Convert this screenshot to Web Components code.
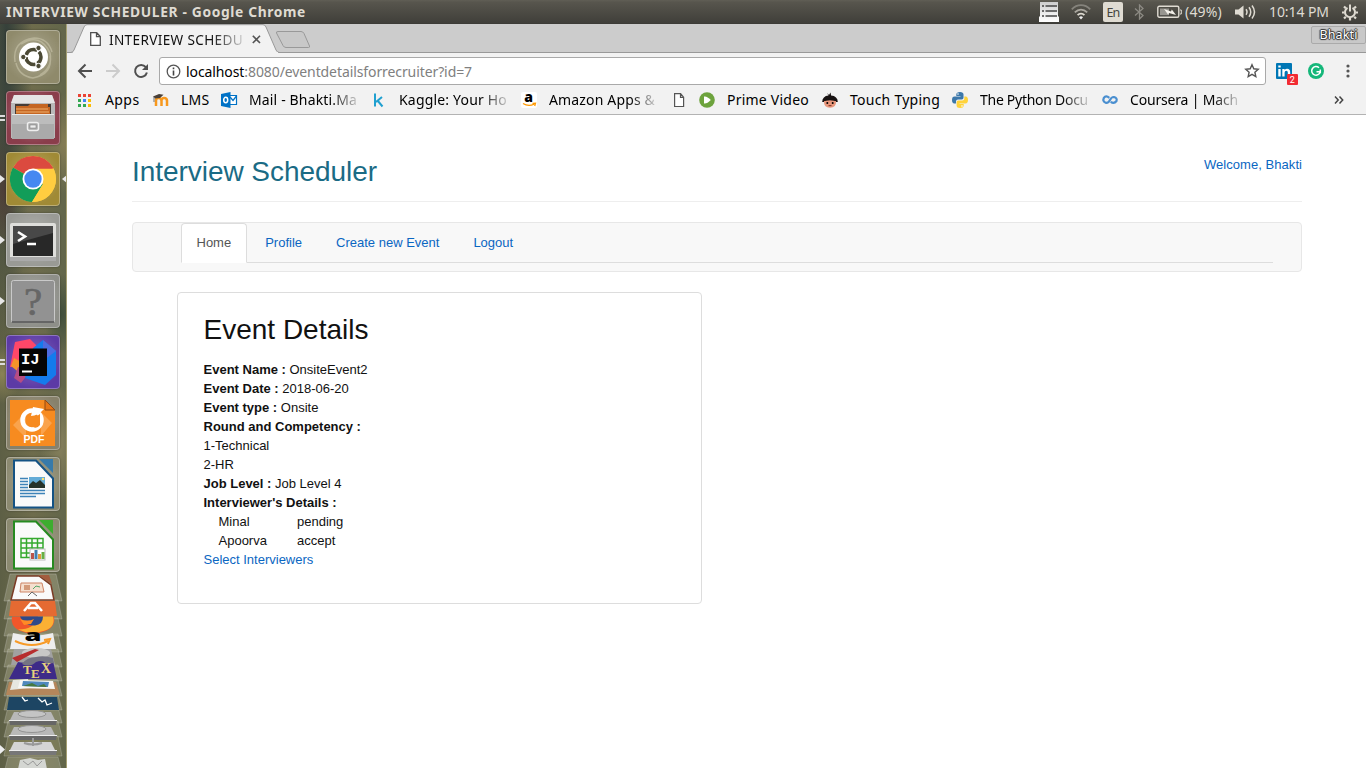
<!DOCTYPE html>
<html lang="en">
<head>
<meta charset="utf-8">
<title>Interview Scheduler</title>
<style>
html,body{margin:0;height:100%;overflow:hidden;background:#fff}
body{font-family:"Noto Sans","Open Sans",sans-serif}
</style>
</head>
<body>
<desktop-shell></desktop-shell>

<template id="t-desktop-shell">
<style>
:host{display:grid;grid-template:24px 744px / 67px 1299px;width:1366px;height:768px;overflow:hidden}
top-panel{grid-column:1 / 3}
browser-window{min-width:0}
</style>
<top-panel></top-panel><app-dock></app-dock>
<browser-window><scheduler-page></scheduler-page></browser-window>
</template>

<template id="t-top-panel">
<style>
:host{display:flex;align-items:center;box-sizing:border-box;height:24px;padding:0 8px 0 6px;background:linear-gradient(#605e55 0,#57554d 10%,#403f3a 95%,#3a3935);color:#dfdbd2;font-size:14px;line-height:24px}
.title{font-weight:700;font-size:13.8px;flex:1}
svg{display:block;flex:none}
.en{width:20px;height:20px;border-radius:2px;background:#dfdbd2;color:#45443e;font-size:12.5px;line-height:21px;display:flex;justify-content:center;box-sizing:border-box}
</style>
<div class="title"><fit-text w="300">INTERVIEW SCHEDULER - Google Chrome</fit-text></div>
<svg width="22" height="20" viewBox="0 0 22 20"><defs><linearGradient id="g" x2="0" y2="1"><stop offset="0" stop-color="#ccc"/><stop offset=".6" stop-color="#eee"/><stop offset="1" stop-color="#fff"/></linearGradient></defs><path d="M2 0h18v14l1 1v5H1v-5l1-1z" fill="url(#g)"/><path d="M4 4h2M7.500 4H19M4 9h2M7.500 9H19M4 14h2M7.500 14H19" stroke="#444" stroke-width="1.500"/></svg>
<svg style="margin-left:11px" width="20" height="16" viewBox="0 0 20 16" fill="none" stroke-width="1.8"><path d="M.8 5.300C6-.2 14-.2 19.200 5.300" stroke="#85837c"/><path d="M3.800 8.300C7.500 4.600 12.500 4.600 16.200 8.300" stroke="#aaa79f"/><path d="M6.600 11.200C8.500 9.200 11.500 9.200 13.400 11.200" stroke="#dfdbd2"/><path d="M8 13.200q2-1.700 4 0l-2 2.300z" fill="#eee"/></svg>
<div class="en" style="margin-left:12px"><fit-text w="13">En</fit-text></div>
<svg style="margin-left:11px" width="11" height="16" viewBox="0 0 11 16" fill="none" stroke="#8c8a83" stroke-width="1.300"><path d="M1 4.500L9 11.500 5.500 15V1L9 4.500 1 11.500"/></svg>
<svg style="margin-left:12px" width="25" height="14" viewBox="0 0 25 14"><rect x=".8" y="1.300" width="21" height="11" rx="1.500" fill="none" stroke="#dfdbd2" stroke-width="1.400"/><path d="M23 5h1.300v4H23" fill="none" stroke="#dfdbd2"/><rect x="3" y="3.500" width="9" height="6.700" fill="#989690"/><path d="M7 4l7 2.500.8-2L19 10l-7-2-.8 1.700z" fill="#f2efe8"/></svg>
<fit-text style="margin-left:3px" w="37">(49%)</fit-text>
<svg style="margin-left:13px" width="21" height="16" viewBox="0 0 21 16"><path d="M0 5.500h3.500L8.500 1.500v13l-5-4H0z" fill="#dfdbd2"/><path d="M11 5.200q2 2.800 0 5.600M14 3.300q3.500 4.700 0 9.400M17 1.500q5 6.500 0 13" fill="none" stroke="#dfdbd2" stroke-width="1.500"/></svg>
<fit-text style="margin-left:13px" w="60">10:14 PM</fit-text>
<svg style="margin-left:13px" width="16" height="18" viewBox="0 0 16 18" fill="none" stroke="#dfdbd2"><path d="M5.500 4.800A5 5 0 1 0 10.500 4.800" stroke-width="2"/><path d="M8 1.500v7" stroke-width="2"/><path d="M2 3.500l1.800 1.800M14 3.500l-1.800 1.800M0 9.500h2.500M16 9.500h-2.500M2 15.500l1.800-1.800M14 15.500l-1.800-1.800M8 17.500V15" stroke-width="2.200"/></svg>
</template>

<template id="t-fit-text"><style>:host{display:inline-block;flex:none;overflow:visible}:host([fade]){-webkit-mask-image:linear-gradient(90deg,#000 76%,#0003 99%);mask-image:linear-gradient(90deg,#000 76%,#0003 99%)}span{display:inline-block;white-space:pre;vertical-align:top}</style><span><slot></slot></span></template>

<template id="t-browser-window">
<style>
:host{display:flex;flex-direction:column;background:#fff;overflow:hidden}
.strip{height:29px;background:#ccc;display:flex;align-items:flex-start;position:relative;flex:none}
.tab{display:grid;width:213px;height:29px;flex:none}
.tab>*{grid-area:1/1}
.tab .c{display:flex;align-items:center;height:28px;padding:2px 0 0 23px;box-sizing:border-box;font-size:13.6px;color:#111}
.strip:after{content:"";position:absolute;left:0;right:0;bottom:0;height:1px;background:#999;z-index:0}
.tab,.newtab{position:relative;z-index:1}
.newtab{margin:6px 0 0 -5px}
.user{margin:2px 0 0 auto;width:55px;height:18px;box-sizing:border-box;border:1px solid #aaa;border-radius:2px;background:#c8c8c8;display:flex;justify-content:center;color:#fff;font-size:12.5px;line-height:16px;text-shadow:0 0 1px #222,1px 0 1px #333,-1px 0 1px #333,0 1px 1px #333,0 -1px 1px #333}
.bar{display:flex;align-items:center;height:36px;flex:none;background:#f2f2f2;padding-left:10px;box-sizing:border-box}
.bar>svg{flex:none;overflow:visible}
.omni{margin-left:10px;width:1107px;height:28px;box-sizing:border-box;border:1px solid #a9a9a9;border-radius:3px;background:#fff;display:flex;align-items:center;padding:0 5px 0 6px;font-size:14px;color:#808080;flex:none}
.omni b{font-weight:400;color:#000}
.sp{flex:1}
</style>
<div class="strip">
 <div class="tab"><svg width="213" height="29"><path d="M0 28.500H3.500Q6 28.500 7 26L17 3Q18 .7 20 .7H196Q198 .7 199 3L209 26Q210 28.500 212.500 28.500" fill="#f2f2f2" stroke="#999"/><path d="M6 28.500H211" stroke="#f2f2f2"/></svg>
 <div class="c"><svg width="11" height="14" viewBox="0 0 11 14" fill="#fff" stroke="#505050" stroke-width="1.300"><path d="M.7.700h6l3.600 3.800v8.800H.7zM6.500.7v4h3.800"/></svg><fit-text fade style="margin-left:8px" w="134">INTERVIEW SCHEDU</fit-text><svg style="margin-left:9px" width="9" height="9" stroke="#555" stroke-width="1.600"><path d="M.8.800l7.200 7.200M8 .8L.8 8"/></svg></div></div>
 <svg class="newtab" width="36" height="19" fill="#c8c8c8" stroke="#999"><path d="M3 1.500h23q2 0 3 2L34.500 16q.5 1.500-1 1.500H11q-2 0-3-2L1.500 3Q1 1.500 3 1.500z"/></svg>
 <div class="user"><fit-text w="38">Bhakti</fit-text></div>
</div>
<div class="bar">
 <svg width="16" height="16" viewBox="0 0 16 16" fill="none" stroke="#4f4f4f" stroke-width="2"><path d="M15 8H2.500M8.500 1.500L2 8l6.500 6.500"/></svg>
 <svg style="margin-left:12px" width="16" height="16" viewBox="0 0 16 16" fill="none" stroke="#ccc" stroke-width="2"><path d="M1 8h12.500M7.500 1.500L14 8l-6.500 6.500"/></svg>
 <svg style="margin-left:12px" width="16" height="16" viewBox="0 0 16 16" fill="none" stroke="#4f4f4f" stroke-width="2"><path d="M12.800 4.200A6 6 0 1 0 13.900 9.500"/><path d="M15 1v6H9z" fill="#4f4f4f" stroke="none"/></svg>
 <div class="omni"><svg width="15" height="15" viewBox="0 0 15 15"><circle cx="7.500" cy="7.500" r="6.300" fill="none" stroke="#555" stroke-width="1.300"/><path d="M7.500 6.500v5M7.500 3.500v1.700" stroke="#444" stroke-width="1.600"/></svg><fit-text style="margin-left:5px" w="286"><b>localhost</b>:8080/eventdetailsforrecruiter?id=7</fit-text><span class="sp"></span>
 <svg width="16" height="16" viewBox="0 0 16 16" fill="none" stroke="#555" stroke-width="1.400"><path d="M8 1.800l1.800 4 4.400.5-3.300 2.900.9 4.300L8 11.300l-3.800 2.200.9-4.300-3.300-2.900 4.400-.5z"/></svg></div>
 <svg style="margin-left:10px" width="22" height="24" viewBox="0 0 22 24"><rect y="4" width="16" height="16" rx="1" fill="#0077b5"/><path transform="translate(0 2)" d="M2.300 8h2.400v7.500H2.300zM2.300 4.500h2.400v2H2.300zM6.300 8h2.300v1q1-1.200 2.600-1.200 3 0 3 3.500v4.200h-2.400v-4q0-1.800-1.400-1.800-1.800 0-1.800 2v3.800H6.300z" fill="#fff"/><rect x="11" y="15" width="11" height="11" rx="1" fill="#f22b33"/><text x="16.400" y="24" text-anchor="middle" font-family="Roboto,sans-serif" font-size="9" fill="#fff">2</text></svg>
 <svg style="margin-left:10px" width="16" height="16" viewBox="0 0 16 16"><circle cx="8" cy="8" r="8" fill="#15b77a"/><path d="M11 4.800A4.300 4.300 0 1 0 12.200 8.800H8.500M12.300 6.600v3.600" fill="none" stroke="#fff" stroke-width="1.500"/></svg>
 <svg style="margin-left:22px" width="4" height="14" fill="#555"><circle cx="2" cy="2" r="1.600"/><circle cx="2" cy="7" r="1.600"/><circle cx="2" cy="12" r="1.600"/></svg>
</div>
<bookmark-bar></bookmark-bar>
<slot></slot>
</template>

<template id="t-bookmark-item">
<style>:host{display:flex;align-items:center;gap:12px;height:20px}::slotted(svg){width:16px;height:16px;flex:none;display:block;overflow:visible}</style><slot></slot>
</template>

<template id="t-bookmark-bar">
<style>
:host{display:grid;grid-template-columns:76px 68px 150px 150px 150px 28px 123px 130px 150px 150px 1fr;height:26px;flex:none;box-sizing:border-box;padding:0 0 3px 10px;background:#f2f2f2;border-bottom:1px solid #b3b3b3;font-size:14px;line-height:20px;color:#000;align-items:center}
.more{justify-self:end;margin-right:22px}
</style>
<bookmark-item><svg viewBox="0 0 16 16"><path d="M1 2h3v3H1zM6 2h3v3H6zM11 2h3v3h-3z" fill="#ea4335"/><path d="M1 7h3v3H1zM1 12h3v3H1z" fill="#34a853"/><path d="M6 7h3v3H6z" fill="#4285f4"/><path d="M6 12h3v3H6z" fill="#34a853"/><path d="M11 7h3v3h-3zM11 12h3v3h-3z" fill="#fbbc05"/></svg><fit-text w="34.500">Apps</fit-text></bookmark-item>
<bookmark-item><svg viewBox="0 0 16 16"><path d="M3 14V8.500q0-2.500 2.600-2.500T8.500 8.500V14M8.500 8.500Q8.700 6 11.200 6t2.800 2.500V14" fill="none" stroke="#f7981d" stroke-width="2.500"/><path d="M0 4.500L6 2l4.500.8L7 6 2 6.500z" fill="#4a4038"/><path d="M1 5v5" stroke="#777"/></svg><fit-text w="28.500">LMS</fit-text></bookmark-item>
<bookmark-item><svg viewBox="0 0 16 16"><path d="M8 3.500h7.500v9H8z" fill="#fff" stroke="#0072c6" stroke-width="1.200"/><path d="M9 5l3 3.500L15.500 4" fill="none" stroke="#0072c6" stroke-width="1.300"/><path d="M0 2l9.500-2v16L0 14z" fill="#0072c6"/><ellipse cx="4.700" cy="8" rx="2" ry="2.700" fill="none" stroke="#fff" stroke-width="1.500"/></svg><fit-text fade w="108">Mail - Bhakti.Ma</fit-text></bookmark-item>
<bookmark-item><svg viewBox="0 0 16 16"><path d="M4 1.500v13M11 5L5 10M6.500 8.500l5 6" fill="none" stroke="#20a0d0" stroke-width="2"/></svg><fit-text fade w="108">Kaggle: Your Ho</fit-text></bookmark-item>
<bookmark-item><svg viewBox="0 0 16 16"><rect width="16" height="16" rx="2" fill="#fff"/><text x="7.500" y="10" text-anchor="middle" font-family="Open Sans,sans-serif" font-weight="800" font-size="14">a</text><path d="M2 11.500q5.500 3.500 11 .6M11.500 11.500l3-.2-.8 2.700" fill="none" stroke="#f90" stroke-width="1.300"/></svg><fit-text fade w="106">Amazon Apps &amp;</fit-text></bookmark-item>
<bookmark-item><svg viewBox="0 0 16 16" fill="#fff" stroke="#555" stroke-width="1.200"><path d="M3.600 1.600h6l3 3.500v9.400h-9zM9.500 1.600v3.700h3"/></svg></bookmark-item>
<bookmark-item><svg viewBox="0 0 16 16"><circle cx="8" cy="8" r="7.800" fill="#6da33d"/><path d="M5 4.500q3-.7 6.800 3.500Q8 12 5 11.500z" fill="#fff"/></svg><fit-text w="82">Prime Video</fit-text></bookmark-item>
<bookmark-item><svg viewBox="0 0 16 16"><path d="M5 1l2 2 1.500-2.500.6 3Q15.500 4 15.800 10H.2Q.5 4 6.500 3.500z" fill="#181212"/><path d="M2 9q6-2 12 0 .5 6.500-6 6.800Q1.500 15.500 2 9z" fill="#e9977c"/><path d="M1 8.500q7-2 14 0" stroke="#181212" stroke-width="1.600" fill="none"/><circle cx="5.300" cy="11" r="1"/><circle cx="10.700" cy="11" r="1"/><path d="M6.500 13.700h3" stroke="#7a3020"/></svg><fit-text w="90">Touch Typing</fit-text></bookmark-item>
<bookmark-item><svg viewBox="0 0 16 16"><path d="M8 0Q4.300 0 4.300 2.500V4H8.500v.6H2.500Q0 4.600 0 8t2.300 3.500H4V9.300Q4 7.600 6 7.600h3.700q1.800 0 1.800-1.800V2.500Q11.500 0 8 0z" fill="#3d78aa"/><path d="M8 16q3.700 0 3.700-2.500V12H7.500v-.6h6Q16 11.400 16 8t-2.300-3.500H12.300v2.200q0 1.700-2 1.700H6.500q-1.900 0-1.900 1.800v3.300Q4.600 16 8 16z" fill="#ffd33b"/><circle cx="6" cy="2" r=".8" fill="#fff"/><circle cx="10" cy="14" r=".8" fill="#fff"/></svg><fit-text fade w="108">The Python Docu</fit-text></bookmark-item>
<bookmark-item><svg viewBox="0 0 16 16" fill="none" stroke="#4a8fd0" stroke-width="2.200"><path d="M7.300 5.800Q4 3 1.800 6q-1.500 3.500 2 4.800Q6.500 11.200 8 8t4-3q3.500 1 2.500 4-2.500 3.300-5.800.8"/></svg><fit-text fade w="108">Coursera | Mach</fit-text></bookmark-item>
<svg class="more" width="10" height="10" fill="none" stroke="#444" stroke-width="1.500"><path d="M1 1.500L4.200 5 1 8.500M5.500 1.500L8.700 5 5.500 8.500"/></svg>
</template>

<template id="t-scheduler-page">
<style>
:host{display:flex;flex-direction:column;padding:0 64px 0 65px;font-family:"Liberation Sans",Arial,sans-serif;font-size:13px;line-height:19px;color:#111;flex:1}
header{display:flex;justify-content:space-between;height:86px;border-bottom:1px solid #eee}
h1{margin:40px 0 0;font-weight:400;font-size:28px;line-height:34px;color:#1a6b85}
a{color:#0a66c2;text-decoration:none}
header a{margin-top:40px}
</style>
<header><h1><fit-text w="245">Interview Scheduler</fit-text></h1><a href="#"><fit-text w="98">Welcome, Bhakti</fit-text></a></header>
<nav-tabs></nav-tabs>
<event-card></event-card>
</template>

<template id="t-nav-tabs">
<style>
:host{display:block;box-sizing:border-box;height:50px;margin-top:20px;border:1px solid #e7e7e7;border-radius:4px;background:#f8f8f8;padding:0 28px 0 47.500px}
nav{display:flex;gap:2px;height:40px;box-sizing:border-box;border-bottom:1px solid #ddd}
a{box-sizing:border-box;height:40px;padding:10px 15px;border:1px solid transparent;border-radius:4px 4px 0 0;color:#0a66c2;text-decoration:none;line-height:18px}
a.on{background:#fff;border-color:#ddd #ddd #fff;color:#555}
</style>
<nav><a class="on" href="#">Home</a><a href="#">Profile</a><a href="#">Create new Event</a><a href="#">Logout</a></nav>
</template>

<template id="t-event-card">
<style>
:host{display:block;box-sizing:border-box;width:525px;height:312px;margin:20px 0 0 45px;border:1px solid #ddd;border-radius:4px;padding:20px 25.500px}
h2{margin:0 0 13px;font-weight:400;font-size:28px;line-height:34px}
dl{margin:0}dl div{height:19px}dt,dd{display:inline;margin:0}dt{font-weight:700}
.who{display:grid;grid-template-columns:78.500px auto;padding-left:15px}
a{color:#0a66c2;text-decoration:none}
</style>
<h2><fit-text w="165">Event Details</fit-text></h2>
<dl><div><dt>Event Name :</dt> <dd>OnsiteEvent2</dd></div><div><dt>Event Date :</dt> <dd>2018-06-20</dd></div><div><dt>Event type :</dt> <dd>Onsite</dd></div><div><dt>Round and Competency :</dt></div><div>1-Technical</div><div>2-HR</div><div><dt>Job Level :</dt> <dd>Job Level 4</dd></div><div><dt>Interviewer's Details :</dt></div></dl>
<div class="who"><span>Minal</span><span>pending</span><span>Apoorva</span><span>accept</span></div>
<a href="#">Select Interviewers</a>
</template>

<template id="t-dock-tile">
<style>
:host{display:grid;grid-template-columns:6px 54px 7px;align-items:center;height:54px;flex:none}
.t{width:54px;height:54px;box-sizing:border-box;border-radius:4px;border:1px solid #ffffff4d;background:radial-gradient(circle at 50% 45%,#ffffff40,transparent 75%),var(--tile,#8b8970);display:block;box-shadow:0 0 2px #0006}
::slotted(svg){display:block;width:52px;height:52px}
i{display:block;width:0;height:0}
:host([run="1"]) .l{border:solid transparent;border-width:4px 0 4px 5px;border-left-color:#e8e8e8}
:host([run="2"]) .l{width:5px;height:2px;border:solid #ddd;border-width:2px 0}
:host([active]) .r{border:solid transparent;border-width:4px 5px 4px 0;border-right-color:#e8e8e8;justify-self:end}
</style><i class="l"></i><div class="t"><slot></slot></div><i class="r"></i>
</template>

<template id="t-app-dock">
<style>
:host{display:flex;flex-direction:column;gap:7px;box-sizing:border-box;height:744px;padding-top:6px;overflow:hidden;border-right:1px solid #a59f72;background:radial-gradient(ellipse at 10% 2%,#35403a,transparent 30%),radial-gradient(ellipse 14px 60px at 4px 165px,#643c35,transparent),radial-gradient(ellipse 30px 50px at 66px 120px,#857d55,transparent),radial-gradient(ellipse 18px 40px at 62px 290px,#414f3b,transparent),radial-gradient(ellipse 20px 30px at 2px 350px,#8a8255,transparent),radial-gradient(ellipse 20px 60px at 60px 420px,#86805c,transparent),linear-gradient(90deg,#5d5f45,#6e6c4c 50%,#62664a)}
.stack{display:block;flex:none;margin-top:-6px}
</style>
<dock-tile style="--tile:#8f8a6b"><svg viewBox="0 0 52 52" fill="none"><path d="M8 31Q5 10 27 7q14 0 18 14M14 13Q33 1 43 22q3 14-10 22M43 25q3 18-17 22Q12 45 9 32" stroke="#c2bea2" stroke-width="1.500" opacity=".7"/><circle cx="26.500" cy="26" r="14.500" fill="#fff"/><circle cx="26.500" cy="26" r="7.500" stroke="#4b4935" stroke-width="3.500" stroke-dasharray="13.700 2" stroke-dashoffset="6"/><g fill="#4b4935" stroke="#fff"><circle cx="16.300" cy="26" r="2.700"/><circle cx="31.500" cy="17" r="2.700"/><circle cx="31.500" cy="35" r="2.700"/></g></svg></dock-tile>
<dock-tile run="2" style="--tile:#8a3d4b"><svg viewBox="0 0 52 52"><path d="M7 3h38l3 9v34H4V12z" fill="#b9b9b9"/><path d="M7 3h38l3 8H4z" fill="#e5e5e5"/><path d="M8 12h36v12H8z" fill="#463c36"/><path d="M9 14h12l2-2h18v3h2v9H9z" fill="#c56622"/><path d="M9 17h32M9 20h33" stroke="#f1b06d"/><path d="M5 22h42v25H5z" fill="#aaa"/><path d="M5 22h42v10H5z" fill="#bcbcbc"/><path d="M5 22.500h42" stroke="#e8e8e8"/><rect x="20.500" y="30.500" width="11" height="8" rx="2" fill="#aaa" stroke="#eee" stroke-width="1.500"/><rect x="23" y="33" width="6" height="3" fill="#eee" stroke="#777" stroke-width=".5"/></svg></dock-tile>
<dock-tile run="1" active style="--tile:#a08a35"><svg viewBox="0 0 52 52"><circle cx="26" cy="26" r="23" fill="#ffcd40"/><path d="M26 26L6 14.500A23 23 0 0 1 46 15z" fill="#db4a3f"/><path d="M26 26L6 14.500A23 23 0 0 0 25 49L36 31z" fill="#129d59"/><path d="M26 15.500h20.500q2.500 4.500 2.500 10.500a23 23 0 0 1-24 23l11-18z" fill="#ffcd40"/><path d="M26 15.500h20.300L44 12l-22-5z" fill="#db4a3f"/><circle cx="26" cy="26" r="10.500" fill="#fff"/><circle cx="26" cy="26" r="8.700" fill="#4688f1"/></svg></dock-tile>
<dock-tile run="1" style="--tile:#999a95"><svg viewBox="0 0 52 52"><rect x="3" y="9" width="46" height="38" rx="2" fill="#dededb"/><rect x="3" y="43" width="46" height="4" fill="#aaa"/><rect x="6" y="12" width="40" height="30" fill="#282828"/><path d="M6 12h40v7L6 30z" fill="#484848"/><path d="M11 18l7 4.500-7 4.500M20 30h9" fill="none" stroke="#fff" stroke-width="2.600"/></svg></dock-tile>
<dock-tile run="1" style="--tile:#8e8f89"><svg viewBox="0 0 52 52"><rect x="4.500" y="5.500" width="43" height="42" rx="2" fill="#929292" stroke="#c9c9c9"/><path d="M5 47h42" stroke="#656565" stroke-width="2"/><text x="26" y="40" text-anchor="middle" font-family="Liberation Serif,serif" font-size="41" fill="#666" stroke="#666" stroke-width=".7">?</text></svg></dock-tile>
<dock-tile run="2" style="--tile:#5c3aa5"><svg viewBox="0 0 52 52"><path d="M8 6l15-3 8 8-13 20H3z" fill="#fe4769"/><path d="M7 22l9 5-2 11-10-8z" fill="#f5942a"/><path d="M11 31l13 3-10 13-7-5z" fill="#b64c83"/><path d="M26 12L36 4l13 11v24L38 49l-20-7z" fill="#147bec"/><path d="M36 4l13 11-13 10z" fill="#4e6be0"/><rect x="12" y="12.500" width="28" height="27.500" fill="#050505"/><path d="M15 35.500h10" stroke="#fff" stroke-width="2"/><text x="14" y="28" font-family="Liberation Mono,monospace" font-size="15.500" font-weight="700" fill="#fff">IJ</text></svg></dock-tile>
<dock-tile style="--tile:#87816b"><svg viewBox="0 0 52 52"><path d="M3 3h35l10 10v36H3z" fill="#f78b20"/><path d="M38 3l10 10H38z" fill="#e67616" stroke="#914a14"/><path d="M6 28L19 15v26zM34 15l11 11-11 13z" fill="#faa34c"/><circle cx="25" cy="23" r="9.500" fill="none" stroke="#fff" stroke-width="4.500"/><path d="M26 10l11 2q-6 7-13 7z" fill="#fff"/><path d="M30 19l3-2v11q-3 4-7 2z" fill="#f78b20"/><text x="27" y="46" text-anchor="middle" font-family="Liberation Sans,sans-serif" font-size="10.500" font-weight="700" fill="#fff">PDF</text></svg></dock-tile>
<dock-tile><svg viewBox="0 0 52 52"><path d="M7 2.500h22l17 18v29H7z" fill="#fafafa" stroke="#145284" stroke-width="2"/><path d="M32 1h14v14z" fill="#377aaa"/><path d="M13 20.500h8M13 23.500h8M13 26.500h8M13 29.500h8M13 32.500h25M13 35.500h25M13 38.500h16" stroke="#3e83b8" stroke-width="1.500"/><path d="M22 19h16v11H22z" fill="#63abd6"/><path d="M22 27l4-4 3 2 4-3 5 5v3H22z" fill="#26332a"/><circle cx="36" cy="21" r="1.300" fill="#ffe16c"/></svg></dock-tile>
<dock-tile><svg viewBox="0 0 52 52"><path d="M7 2.500h22l17 18v29H7z" fill="#fafafa" stroke="#268a20" stroke-width="2"/><path d="M32 1h14v14z" fill="#3dad2f"/><path d="M14 19.500h22v19H14zM14 24h22M14 29h22M14 34h22M19.500 19.500v19M25 19.500v19M30.500 19.500v19" fill="none" stroke="#35a92e" stroke-width="1.500"/><rect x="23" y="30" width="15" height="11" fill="#fff" stroke="#bbb"/><path d="M24 34h3v6h-3z" fill="#bb554a"/><path d="M27.500 31h3v9h-3z" fill="#4181b3"/><path d="M31 35h3v5h-3z" fill="#e39b3e"/><path d="M34.500 33h3v7h-3z" fill="#67af43"/></svg></dock-tile>
<svg class="stack" width="66" height="196" viewBox="0 0 66 196">
<g fill="#bbb99f" fill-opacity=".35" stroke="#ddd" stroke-opacity=".25"><path d="M10 1h46l6 27H4z"/><path d="M8 27h50l4 19H4z"/><path d="M8 45h50l4 18H4z"/><path d="M8 61h50l4 18H4z"/><path d="M8 76h50l4 18H4z"/><path d="M8 92h50l4 16H4z"/><path d="M8 107h50l4 16H4z"/><path d="M8 121h50l4 16H4z"/><path d="M8 134h50l4 16H4z"/><path d="M8 148h50l4 16H4z"/><path d="M8 163h50l4 20H4z" fill="#a19d74"/><path d="M8 184h50l3 12H5z"/></g>
<path d="M17 3h22l12 9 3 15H11z" fill="#fafafa" stroke="#7b3b25" stroke-width="1.500"/><path d="M38 2h11l3 9z" fill="#a35d3e"/><path d="M21 10h21l2 9H20z" fill="#f5dfcf" stroke="#ce8566"/><path d="M24 12h6v5h-6z" fill="#d39a7a"/><path d="M33 16l3-3 4 1" stroke="#53a768" fill="none"/><path d="M32 19l-4 4M32 19l5 4" stroke="#666"/>
<path d="M11 28h44l2 15H9z" fill="#e56a32"/><path d="M24 38l7-8h4l7 8M28 35h10" fill="none" stroke="#fff" stroke-width="2.500"/>
<path d="M12 43.500h42q2 9-7 14-14 6-28 0-9-5-7-14z" fill="#f0562a"/><path d="M38 43.500h15q3 10-8 14-14 5-27-1 17 0 20-13z" fill="#fbb034"/><path d="M20 43.500h23q0 8-8 9-11 1-15-9z" fill="#304a89"/><path d="M20 46q8 3 14 0l-3 5-7 1z" fill="#ff8a25"/>
<path d="M13 60q20 5 40 0l3 16H10z" fill="#eee"/><text x="33" y="68" text-anchor="middle" font-family="Open Sans,sans-serif" font-size="16" font-weight="800" textLength="17" lengthAdjust="spacingAndGlyphs">a</text><path d="M15 68q17 8 33 0M44 67l6-1-2 5" fill="none" stroke="#f79a26" stroke-width="2"/>
<path d="M14 76h37l4 16H11z" fill="#a1a1a0"/><ellipse cx="36" cy="80" rx="14" ry="5" fill="#c8c8c6"/><path d="M12 85l23-9 4 1-22 12z" fill="#b72e2e"/>
<path d="M18 89q10 2 14-2 6-5 13 1h8l4 18H9z" fill="#3d2b88"/><path d="M22 91q8 4 14-2 7-3 10 2l8-1-1-5q-9-3-17-1-9 0-14 7z" fill="#747482"/><text x="23" y="101" font-family="Liberation Serif,serif" font-size="13" font-weight="700" fill="#e7d27d">T</text><text x="31" y="105" font-family="Liberation Serif,serif" font-size="13" font-weight="700" fill="#e7d27d">E</text><text x="41" y="100" font-family="Liberation Serif,serif" font-size="14" font-weight="700" fill="#e7d27d">X</text>
<path d="M9 109h47l4 13H6z" fill="#b4865b"/><path d="M13 107l15-1 2 9-20 2z" fill="#e6e7e1"/><path d="M20 107l33 1 2 8-37-1z" fill="#f7f7f5"/><path d="M23 108l26 1-1 5-26-1z" fill="#4f88bd"/><path d="M23 113l9-3 6 3 6-2 3 3z" fill="#467940"/>
<path d="M9 124h48l2 13H7z" fill="#1d4563"/><path d="M22 124l3 4 3-1M38 125l4 4 3-2 2 5 5-2" fill="none" stroke="#fff" stroke-width="1.300"/>
<g id="d"><path d="M14 139h37l5 10H9z" fill="#b8b8b8"/><ellipse cx="32" cy="141" rx="14" ry="3.500" fill="#c4c4c4" stroke="#929292"/><path d="M9 147h48l-1 5H10z" fill="#666"/><path d="M9 147.500h48" stroke="#eee"/></g><use href="#d" y="15"/>
<path d="M14 169h37l5 10H9z" fill="#d4d4d4"/><path d="M9 177h48l-1 5H10z" fill="#777"/><path d="M9 177.500h48" stroke="#eee"/><path d="M33 165v8M24 170q9 3 18 0" stroke="#999" fill="none" stroke-width="2"/><path d="M0 172v9l5-4.500z" fill="#eee"/>
<path d="M20 187l10-2 8 2 7-1 2 10H18z" fill="#d4d6d2"/><path d="M23 188l5 4 5-4 4 5 5-5" fill="none" stroke="#999"/>
</svg>
</template>

<script>
function define(name, after) {
  customElements.define(name, class extends HTMLElement {
    connectedCallback() {
      if (this.shadowRoot) return;
      this.attachShadow({ mode: 'open' })
        .append(document.importNode(document.getElementById('t-' + name).content, true));
      if (after) after(this);
    }
  });
}
// Spreads a label over the width given in its "w" attribute by adjusting the tracking.
define('fit-text', el => {
  const w = parseFloat(el.getAttribute('w'));
  const span = el.shadowRoot.querySelector('span');
  const n = el.textContent.length;
  const natural = span.getBoundingClientRect().width;
  if (natural && n) span.style.letterSpacing = ((w - natural) / n) + 'px';
  el.style.width = w + 'px';
});
['dock-tile','bookmark-item','bookmark-bar','nav-tabs','event-card','scheduler-page','top-panel','app-dock','browser-window','desktop-shell'].forEach(n => define(n));
</script>
</body>
</html>
